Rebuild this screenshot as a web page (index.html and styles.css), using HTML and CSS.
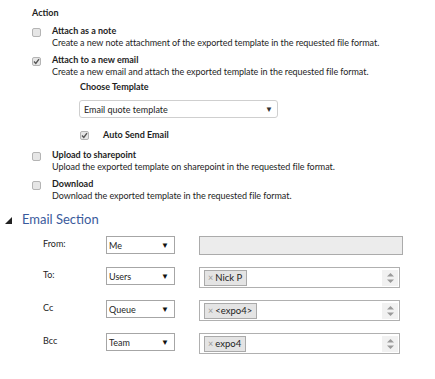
FILE: index.html
```html
<!DOCTYPE html>
<html lang="en">
<head>
    <meta charset="UTF-8">
    <meta name="viewport" content="width=device-width, initial-scale=1.0">
    <title>Export Template Actions</title>
    <link rel="stylesheet" href="styles.css">
</head>
<body>
    <div class="page">
        <div class="actions">
            <div class="heading">Action</div>

            <div class="option">
                <span class="box"></span>
                <div class="option-text">
                    <div class="option-title">Attach as a note</div>
                    <div class="option-desc">Create a new note attachment of the exported template in the requested file format.</div>
                </div>
            </div>

            <div class="option">
                <span class="box checked">
                    <svg width="7" height="7" viewBox="0 0 7 7"><path d="M1 3.6 L2.8 5.4 L6 1.2" fill="none" stroke="#555" stroke-width="1.4"/></svg>
                </span>
                <div class="option-text">
                    <div class="option-title">Attach to a new email</div>
                    <div class="option-desc">Create a new email and attach the exported template in the requested file format.</div>
                </div>
            </div>

            <div class="template">
                <div class="template-label">Choose Template</div>
                <div class="dropdown">
                    <span>Email quote template</span>
                    <span class="dropdown-arrow">&#9660;</span>
                </div>
                <div class="auto-send">
                    <span class="box checked">
                        <svg width="7" height="7" viewBox="0 0 7 7"><path d="M1 3.6 L2.8 5.4 L6 1.2" fill="none" stroke="#555" stroke-width="1.4"/></svg>
                    </span>
                    <span class="option-title">Auto Send Email</span>
                </div>
            </div>

            <div class="option">
                <span class="box"></span>
                <div class="option-text">
                    <div class="option-title">Upload to sharepoint</div>
                    <div class="option-desc">Upload the exported template on sharepoint in the requested file format.</div>
                </div>
            </div>

            <div class="option">
                <span class="box"></span>
                <div class="option-text">
                    <div class="option-title">Download</div>
                    <div class="option-desc">Download the exported template in the requested file format.</div>
                </div>
            </div>
        </div>

        <div class="email-section">
            <div class="section-title">
                <svg class="collapse-icon" width="7" height="7" viewBox="0 0 7 7"><polygon points="7,0 7,7 0,7" fill="#222"/></svg>
                <span>Email Section</span>
            </div>

            <div class="field-row">
                <div class="field-label">From:</div>
                <div class="picker"><span>Me</span><span class="picker-arrow">&#9660;</span></div>
                <div class="text-input"></div>
            </div>

            <div class="field-row">
                <div class="field-label">To:</div>
                <div class="picker"><span>Users</span><span class="picker-arrow">&#9660;</span></div>
                <div class="tag-input">
                    <span class="tag"><span class="tag-x">&times;</span>Nick P</span>
                    <span class="spinner">
                        <svg width="7" height="12" viewBox="0 0 7 12"><polygon points="3.5,1 7,4.5 0,4.5" fill="#9a9a9a"/><polygon points="0,7.5 7,7.5 3.5,11" fill="#9a9a9a"/></svg>
                    </span>
                </div>
            </div>

            <div class="field-row">
                <div class="field-label">Cc</div>
                <div class="picker"><span>Queue</span><span class="picker-arrow">&#9660;</span></div>
                <div class="tag-input">
                    <span class="tag"><span class="tag-x">&times;</span>&lt;expo4&gt;</span>
                    <span class="spinner">
                        <svg width="7" height="12" viewBox="0 0 7 12"><polygon points="3.5,1 7,4.5 0,4.5" fill="#9a9a9a"/><polygon points="0,7.5 7,7.5 3.5,11" fill="#9a9a9a"/></svg>
                    </span>
                </div>
            </div>

            <div class="field-row">
                <div class="field-label">Bcc</div>
                <div class="picker"><span>Team</span><span class="picker-arrow">&#9660;</span></div>
                <div class="tag-input">
                    <span class="tag"><span class="tag-x">&times;</span>expo4</span>
                    <span class="spinner">
                        <svg width="7" height="12" viewBox="0 0 7 12"><polygon points="3.5,1 7,4.5 0,4.5" fill="#9a9a9a"/><polygon points="0,7.5 7,7.5 3.5,11" fill="#9a9a9a"/></svg>
                    </span>
                </div>
            </div>
        </div>
    </div>
</body>
</html>
```

FILE: styles.css
```css
body {
    margin: 0;
    background-color: white;
    color: #1e1e1e;
    font-family: Lato, "Open Sans", sans-serif;
    font-size: 9px;
}
.page {
    width: 435px;
}
.actions {
    padding: 7px 0 0 32px;
}
.heading {
    font-weight: bold;
    line-height: 12px;
    margin-bottom: 6px;
}
.option {
    display: flex;
    gap: 11px;
    margin-bottom: 5px;
}
.option-title {
    font-weight: bold;
    line-height: 12px;
}
.option-desc {
    line-height: 12px;
    letter-spacing: -0.06px;
}
.box {
    display: flex;
    align-items: center;
    justify-content: center;
    width: 7px;
    height: 7px;
    margin-top: 3px;
    border: 1px solid #b4b4b4;
    border-radius: 2px;
    background-color: #e6e6e6;
    flex-shrink: 0;
}
.template {
    padding-left: 47px;
    margin-top: -2px;
    margin-bottom: 8px;
}
.template-label {
    font-weight: bold;
    line-height: 12px;
    padding-left: 1px;
    margin-bottom: 7px;
}
.dropdown {
    display: flex;
    justify-content: space-between;
    align-items: center;
    width: 189px;
    height: 16px;
    padding: 0 4px 0 4px;
    border: 1px solid #cfcfcf;
    border-radius: 3px;
    margin-bottom: 11px;
}
.dropdown-arrow {
    font-size: 8px;
    color: #333;
}
.auto-send {
    display: flex;
    gap: 14px;
    padding-left: 1px;
}
.auto-send .box {
    margin-top: 2px;
}
.email-section {
    padding-top: 3px;
}
.section-title {
    display: flex;
    align-items: center;
    gap: 10px;
    padding-left: 5px;
    height: 18px;
    color: #3a5a9c;
    font-size: 13px;
}
.collapse-icon {
    margin-top: 2px;
}
.field-row {
    display: flex;
    margin-top: 12px;
}
.section-title + .field-row {
    margin-top: 8px;
}
.field-label {
    width: 63px;
    padding: 2px 0 0 43px;
    line-height: 12px;
}
.picker {
    display: flex;
    justify-content: space-between;
    align-items: center;
    width: 60px;
    height: 16px;
    padding: 0 5px 0 2px;
    border: 1px solid #a6a6a6;
    margin-right: 24px;
}
.picker-arrow {
    font-size: 8px;
    color: #111;
}
.text-input {
    width: 202px;
    height: 17px;
    border: 1px solid #ababab;
    background-color: #ececec;
}
.tag-input {
    display: flex;
    justify-content: space-between;
    align-items: center;
    width: 194px;
    height: 19px;
    padding: 0 1px 0 4px;
    border: 1px solid #b0b0b0;
}
.tag {
    display: flex;
    align-items: center;
    height: 14px;
    padding: 0 4px 0 3px;
    border: 1px solid #aaa;
    background-color: #e4e4e4;
    color: #222;
    font-size: 9.5px;
}
.tag-x {
    color: #999;
    font-size: 9px;
    margin-right: 2px;
}
.spinner {
    display: flex;
    align-items: center;
    justify-content: center;
    width: 16px;
    height: 16px;
    background-color: #f1f1f1;
}
```
